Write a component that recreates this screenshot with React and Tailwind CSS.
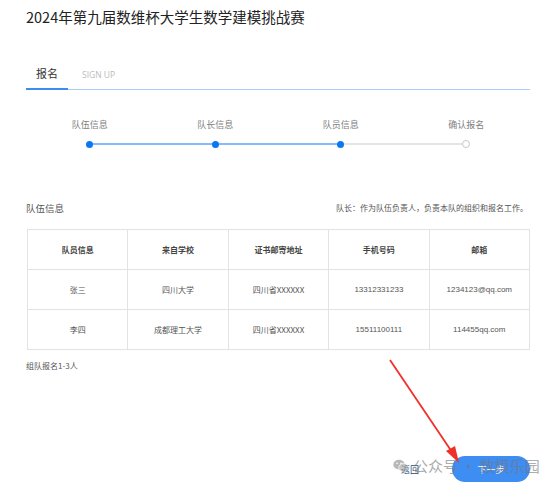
import React from "react";

const F = { fontFamily: '"Noto Sans CJK SC", "Noto Sans", sans-serif' };

const rows = [
  ["张三", "四川大学", "四川省XXXXXX", "13312331233", "1234123@qq.com"],
  ["李四", "成都理工大学", "四川省XXXXXX", "15511100111", "114455qq.com"],
];
const heads = ["队员信息", "来自学校", "证书邮寄地址", "手机号码", "邮箱"];
const steps = ["队伍信息", "队长信息", "队员信息", "确认报名"];

export default function App() {
  return (
    <div className="relative w-[553px] h-[490px] bg-white overflow-hidden text-[#333]" style={F}>
      <div className="pl-[26px] pr-[23px]">
        <div className="pt-[6px] text-[14.5px] leading-[22px] text-[#222] whitespace-nowrap">2024年第九届数维杯大学生数学建模挑战赛</div>

        {/* tabs */}
        <div className="mt-[35px] flex items-end w-[504px] border-b border-[#a9cdf6]">
          <div className="w-[42px] flex flex-col items-center">
            <span className="text-[11px] leading-[20px] text-[#333]">报名</span>
            <div className="mt-[4px] h-[2px] w-full bg-[#3f8cf0] translate-y-[1px]" />
          </div>
          <span className="ml-[14px] mb-[7px] text-[8.5px] leading-[14px] text-[#bbb]" style={{ fontFamily: '"Open Sans", "Noto Sans", sans-serif' }}>SIGN UP</span>
        </div>

        {/* steps */}
        <div className="mt-[28px] grid grid-cols-4 w-[502px] ml-px">
          {steps.map((s, i) => (
            <div key={s} className="flex flex-col items-center relative">
              <span className="text-[9px] leading-[14px] text-[#808080]">{s}</span>
              <div className="mt-[8px] h-[8px] flex items-center w-full justify-center relative">
                {i < 3 && (
                  <div className={`absolute left-1/2 w-full h-[1.5px] ${i < 2 ? "bg-[#86bbf8]" : "bg-[#e4e4e4]"}`} />
                )}
                {i < 3 ? (
                  <div className="relative w-[7px] h-[7px] rounded-full bg-[#0a79f0]" />
                ) : (
                  <div className="relative w-[8px] h-[8px] rounded-full bg-white border border-[#c8c8c8]" />
                )}
              </div>
            </div>
          ))}
        </div>

        {/* section header */}
        <div className="mt-[53px] flex justify-between items-center w-[502px]">
          <span className="text-[9.5px] text-[#555]">队伍信息</span>
          <span className="text-[8px] text-[#555]">队长：作为队伍负责人，负责本队的组织和报名工作。</span>
        </div>

        {/* table */}
        <table className="mt-[14px] w-[503px] ml-px border-collapse table-fixed">
          <thead>
            <tr className="h-[40px]">
              {heads.map((h) => (
                <th key={h} className="border border-[#e3e3e3] text-[8px] font-bold text-[#444]">{h}</th>
              ))}
            </tr>
          </thead>
          <tbody>
            {rows.map((r, i) => (
              <tr key={i} className="h-[40px]">
                {r.map((c, j) => (
                  <td key={j} className="border border-[#e3e3e3] text-center text-[8px] text-[#555]" style={j >= 3 ? { fontFamily: '"Liberation Sans", sans-serif' } : undefined}>{c}</td>
                ))}
              </tr>
            ))}
          </tbody>
        </table>

        <div className="mt-[10px] text-[8px] text-[#555]">组队报名1-3人</div>

        {/* buttons */}
        <div className="mt-[84px] flex justify-end items-center w-[504px]">
          <span className="text-[9px] text-[#2a4a7a] mr-[33px]">返回</span>
          <div className="w-[78px] h-[26px] rounded-full bg-[#3d8df3] flex items-center justify-center text-[9px] text-white">下一步</div>
        </div>
      </div>

      {/* watermark overlay */}
      <div className="absolute left-[393px] top-[456px] flex items-center gap-[4px] opacity-60 pointer-events-none whitespace-nowrap">
        <svg width="16" height="14" viewBox="0 0 24 20">
          <ellipse cx="9" cy="8" rx="8.5" ry="7.3" fill="#8a8a8a" />
          <ellipse cx="16" cy="12.5" rx="7.5" ry="6.3" fill="#a0a0a0" stroke="#fff" strokeWidth="1" />
          <circle cx="6" cy="6" r="1.2" fill="#fff" />
          <circle cx="12" cy="6" r="1.2" fill="#fff" />
        </svg>
        <span className="text-[15px] leading-[20px] text-[#777]">公众号 · 数模乐园</span>
      </div>

      {/* red arrow */}
      <svg className="absolute left-0 top-0 pointer-events-none" width="553" height="490">
        <line x1="390" y1="360" x2="452" y2="452" stroke="#f0302a" strokeWidth="1.8" />
        <polygon points="459,463 446,451 455,446" fill="#f0302a" />
      </svg>
    </div>
  );
}
